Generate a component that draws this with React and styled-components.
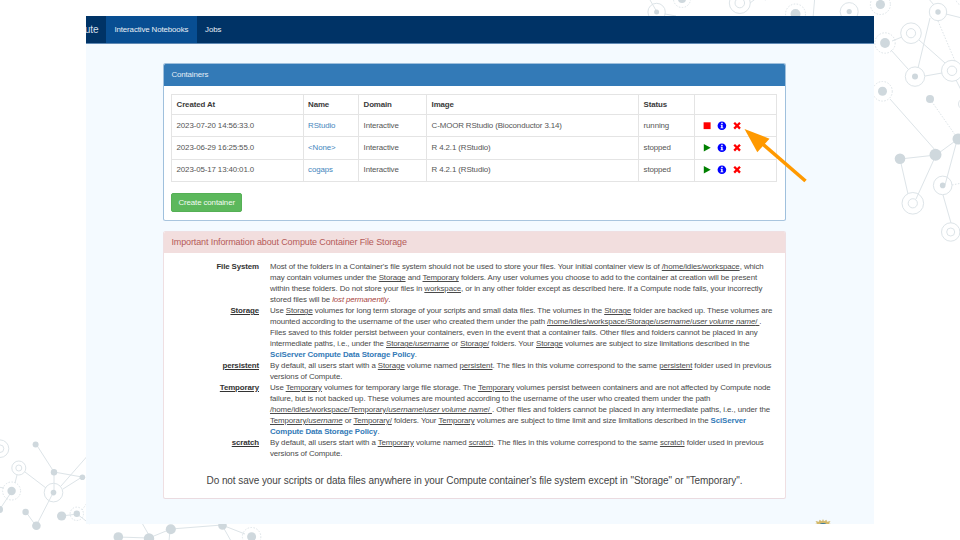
import React from 'react';
import styled, { createGlobalStyle, css } from 'styled-components';

const GlobalStyle = createGlobalStyle`
  *, *::before, *::after { box-sizing: border-box; }
  body { margin: 0; background: #fff; overflow: hidden; }
`;

const Slide = styled.div`
  position: relative;
  width: 960px;
  height: 540px;
  padding: 16px 86px;
  overflow: hidden;
  font-family: 'Liberation Sans', Arial, sans-serif;
  font-size: 7.9px;
  letter-spacing: -0.115px;
  line-height: 10.97px;
  color: #4a4a4a;
`;

const Backdrop = styled.svg`
  position: absolute;
  inset: 0;
`;

const Pointer = styled.svg`
  position: absolute;
  left: 740px;
  top: 124px;
`;

const Screen = styled.main`
  position: relative;
  width: 788px;
  height: 508px;
  background: #f4faff;
  overflow: hidden;
`;

const NavBar = styled.nav`
  display: flex;
  height: 27.5px;
  background: #003366;
  border-bottom: 1px solid #5f89b4;
  color: #e8eef5;
`;

const Brand = styled.div`
  display: flex;
  align-items: center;
  width: 20px;
  padding-top: 3px;
  font-size: 10.1px;
  text-indent: -1.2px;
  color: #d5dfe9;
`;

const NavItem = styled.a`
  display: flex;
  align-items: center;
  padding: 2px 8.4px 0;
  background: ${(p) => (p.$active ? '#084e92' : 'transparent')};
`;

const Content = styled.div`
  display: flex;
  flex-direction: column;
  gap: 10.5px;
  width: 623px;
  margin: 19.5px 0 0 77px;
`;

const Panel = styled.section`
  height: ${(p) => p.$height}px;
  border: 1px solid ${(p) => (p.$danger ? '#efdfe2' : '#9fc0dd')};
  border-bottom-color: ${(p) => (p.$danger ? '#eadbe0' : '#a9c5de')};
  border-radius: 2.5px;
  background: #fff;
  overflow: hidden;
`;

const PanelHeading = styled.header`
  display: flex;
  align-items: center;
  height: 22px;
  padding-left: 7.4px;
  ${(p) =>
    p.$danger
      ? css`
          height: 21px;
          background: #f2dede;
          color: #b55a58;
          font-size: 9px;
        `
      : css`
          background: #337ab7;
          color: #e3edf6;
        `}
`;

const Table = styled.div`
  width: 606px;
  margin: 8px 0 0 7.2px;
  border: 1px solid #e4e4e4;
  border-width: 1px 0 0 1px;
`;

const Row = styled.div`
  display: grid;
  grid-template-columns: 131.5px 55.5px 68px 212px 56px 82px;
  height: ${(p) => (p.$head ? 20 : 22.4)}px;
  font-weight: ${(p) => (p.$head ? 'bold' : 'normal')};
  color: ${(p) => (p.$head ? '#3a3a3a' : '#555')};
`;

const Cell = styled.div`
  display: flex;
  align-items: center;
  padding: 1px 0 0 4.4px;
  border: 1px solid #e4e4e4;
  border-width: 0 1px 1px 0;
  white-space: nowrap;
`;

const NameLink = styled.a`
  color: #4586bd;
`;

const Actions = styled(Cell)`
  padding: 0 0 0 7.2px;
  gap: 4.6px;
`;

const Icon = styled.svg`
  width: 10px;
  height: 10px;
`;

const CreateButton = styled.button`
  display: block;
  width: 71px;
  height: 19px;
  margin: 11px 0 0 7.2px;
  padding: 1px 0 0;
  border: 1px solid #55b055;
  border-radius: 2px;
  background: #5cb85c;
  color: #f2faf2;
  font: inherit;
  letter-spacing: inherit;
`;

const Definitions = styled.dl`
  margin: 9.2px 0 0;
`;

const Definition = styled.div`
  display: grid;
  grid-template-columns: 95px 1fr;
  column-gap: 11px;
`;

const Term = styled.dt`
  font-weight: bold;
  text-align: right;
  color: #333;
  text-decoration: ${(p) => (p.$underlined ? 'underline' : 'none')};
`;

const Detail = styled.dd`
  margin: 0;
`;

const Line = styled.div`
  width: ${(p) => p.$width}px;
  height: 10.97px;
  text-align-last: justify;
  white-space: nowrap;
`;

const Danger = styled.em`
  color: #a94442;
`;

const Policy = styled.a`
  font-weight: bold;
  color: #337ab7;
`;

const Warning = styled.p`
  width: 536px;
  margin: 15px 0 0 42.5px;
  font-size: 10px;
  letter-spacing: -0.07px;
  line-height: 12px;
  text-align-last: justify;
  white-space: nowrap;
  color: #444;
`;

const Crest = styled.svg`
  position: absolute;
  left: 727px;
  top: 502.5px;
`;

const StopIcon = () => (
  <Icon viewBox="0 0 10 10"><rect x="1.6" y="1.3" width="7" height="6.8" fill="#f00" /></Icon>
);
const PlayIcon = () => (
  <Icon viewBox="0 0 10 10"><path d="M1.8 1 8.7 4.8 1.8 8.6Z" fill="#008000" /></Icon>
);
const InfoIcon = () => (
  <Icon viewBox="0 0 10 10">
    <circle cx="4.9" cy="4.7" r="4.3" fill="#00f" />
    <path d="M4.2 1.7h1.5v1.2H4.2zM3.6 3.7h2v2.8h.7v.8H3.5v-.8h.7v-2h-.6z" fill="#fff" />
  </Icon>
);
const RemoveIcon = () => (
  <Icon viewBox="0 0 10 10"><path d="M2.2 1.8 8 7.6M8 1.8 2.2 7.6" stroke="#f00" strokeWidth="2.3" /></Icon>
);

const containers = [
  { created: '2023-07-20 14:56:33.0', name: 'RStudio', image: 'C-MOOR RStudio (Bioconductor 3.14)', status: 'running' },
  { created: '2023-06-29 16:25:55.0', name: '<None>', image: 'R 4.2.1 (RStudio)', status: 'stopped' },
  { created: '2023-05-17 13:40:01.0', name: 'cogaps', image: 'R 4.2.1 (RStudio)', status: 'stopped' },
];

const links = [
  [650, 0, 657, 12], [665, 14, 676, 16], [750, 3, 758, -3], [815, -5, 813, 18], [766, 0, 738, -8],
  [892, 41, 902, 37], [891, 50, 908, 69], [918, 68, 930, 18], [919, 40, 945, 63], [925, 76, 942, 73],
  [928, -2, 934, 5], [946, 14, 962, 18], [956, 80, 962, 92],
  [890, 99, 936, 151], [900, 159, 936, 155], [936, 155, 958, 139], [900, 159, 908, 194],
  [936, 155, 916, 199], [956, 144, 945, 185], [943, 195, 951, 223],
  [36, 444, 54, 472], [54, 472, 82, 477], [54, 472, 54, 493], [82, 477, 63, 489], [61, 486, 90, 453],
  [25, 472, 46, 488], [17, 475, 15, 483], [53, 493, 36, 526], [36, 526, 26, 512], [12, 491, 0, 509],
  [-2, 487, 4, 488], [62, 516, 77, 514], [77, 514, 90, 524], [118, 537, 149, 538], [149, 538, 171, 529],
  [171, 529, 222, 525], [222, 525, 245, 534], [142, 523, 150, 537], [222, 525, 231, 541], [170, 530, 169, 541],
];
const dashedLinks = [[938, 21, 955, 61], [930, 99, 958, 139], [952, 185, 962, 183], [82, 510, 90, 499]];
const dots = [
  [656.6, 12, 2.5], [682, -1, 4], [795.5, 14, 5], [849.2, 11.6, 2.6], [880.4, 4.5, 4.6], [885, 43, 4.9], [938, 12, 2.7],
  [915, 76.6, 3], [882.5, 91.3, 4.5], [930, 99, 4], [900, 158.8, 5.3], [935.5, 154.7, 6], [958, 139, 5.5],
  [942.7, 185.4, 2.8], [35.6, 444.4, 3], [54, 472.3, 3.2], [82.4, 477.3, 2.8], [53.5, 492.6, 2.8], [11.6, 491, 4.2],
  [-.5, 509.5, 3.5], [25.6, 512, 3.2], [36.4, 525.8, 4.3], [61.6, 516, 4.6], [76.8, 513.8, 3.2],
  [118.3, 537, 4.8], [149, 538.5, 5.2], [170.8, 529.2, 5], [222.5, 525.4, 4.3], [251.6, 536.7, 4.5],
];
const rings = [
  [656.6, 12, 8.7], [739.8, 3, 10.5], [739.8, 3, 4.8], [849.2, 11.6, 9], [938, 12, 8.7], [911, 33.2, 10.3],
  [911, 33.2, 4.6], [915, 76.6, 9.7], [952, 70.8, 10.5], [952, 70.8, 4.7], [964, 104, 5.5], [942.7, 185.4, 9.3],
  [912.8, 203.3, 10.8], [912.8, 203.3, 4.6], [950.7, 232, 9.2], [950.7, 232, 4], [0, 448.7, 8.8], [0, 448.7, 3.8],
  [18.8, 468, 7], [18.8, 468, 3], [53.5, 492.6, 9.3],
];
const dashedRings = [
  [682, -1, 8.5], [795.5, 14, 10], [880.4, 4.5, 10], [885, 43, 10.2], [882.5, 91.3, 9.8], [962, -1, 6],
  [11.6, 491, 9], [76.8, 513.8, 6.7], [251.6, 536.7, 9.2],
];

const Network = () => (
  <Backdrop width="960" height="540" fill="none" stroke="#dde4e8">
    {links.map(([a, b, c, d], i) => <line key={i} x1={a} y1={b} x2={c} y2={d} />)}
    {dashedLinks.map(([a, b, c, d], i) => <line key={i} x1={a} y1={b} x2={c} y2={d} strokeDasharray="1.5 1.5" />)}
    {rings.map(([x, y, r], i) => <circle key={i} cx={x} cy={y} r={r} />)}
    {dashedRings.map(([x, y, r], i) => <circle key={i} cx={x} cy={y} r={r} strokeDasharray="1.5 1.5" />)}
    {dots.map(([x, y, r], i) => <circle key={i} cx={x} cy={y} r={r} fill="#cfd8dd" stroke="none" />)}
  </Backdrop>
);

export default function App() {
  return (
    <Slide>
      <GlobalStyle />
      <Network />
      <Screen>
        <NavBar>
          <Brand>ute</Brand>
          <NavItem $active>Interactive Notebooks</NavItem>
          <NavItem>Jobs</NavItem>
        </NavBar>
        <Content>
          <Panel $height={157.5}>
            <PanelHeading>Containers</PanelHeading>
            <Table>
              <Row $head>
                <Cell>Created At</Cell><Cell>Name</Cell><Cell>Domain</Cell>
                <Cell>Image</Cell><Cell>Status</Cell><Cell />
              </Row>
              {containers.map((c) => (
                <Row key={c.created}>
                  <Cell>{c.created}</Cell>
                  <Cell><NameLink>{c.name}</NameLink></Cell>
                  <Cell>Interactive</Cell>
                  <Cell>{c.image}</Cell>
                  <Cell>{c.status}</Cell>
                  <Actions>
                    {c.status === 'running' ? <StopIcon /> : <PlayIcon />}
                    <InfoIcon />
                    <RemoveIcon />
                  </Actions>
                </Row>
              ))}
            </Table>
            <CreateButton>Create container</CreateButton>
          </Panel>
          <Panel $danger $height={268}>
            <PanelHeading $danger>Important Information about Compute Container File Storage</PanelHeading>
            <Definitions>
              <Definition>
                <Term>File System</Term>
                <Detail>
                  <Line $width={493.5}>Most of the folders in a Container's file system should not be used to store your files. Your initial container view is of <u>/home/idies/workspace</u>, which</Line>
                  <Line $width={487}>may contain volumes under the <u>Storage</u> and <u>Temporary</u> folders. Any user volumes you choose to add to the container at creation will be present</Line>
                  <Line $width={492.3}>within these folders. Do not store your files in <u>workspace</u>, or in any other folder except as described here. If a Compute node fails, your incorrectly</Line>
                  <Line $width={120.3}>stored files will be <Danger>lost permanently</Danger>.</Line>
                </Detail>
              </Definition>
              <Definition>
                <Term $underlined>Storage</Term>
                <Detail>
                  <Line $width={502.3}>Use <u>Storage</u> volumes for long term storage of your scripts and small data files. The volumes in the <u>Storage</u> folder are backed up. These volumes are</Line>
                  <Line $width={491.2}>mounted according to the username of the user who created them under the path <u>/home/idies/workspace/Storage/<i>username</i>/<i>user volume name</i>/ </u>.</Line>
                  <Line $width={487.6}>Files saved to this folder persist between your containers, even in the event that a container fails. Other files and folders cannot be placed in any</Line>
                  <Line $width={479.6}>intermediate paths, i.e., under the <u>Storage/<i>username</i></u> or <u>Storage/</u> folders. Your <u>Storage</u> volumes are subject to size limitations described in the</Line>
                  <Line $width={145.8}><Policy>SciServer Compute Data Storage Policy</Policy>.</Line>
                </Detail>
              </Definition>
              <Definition>
                <Term $underlined>persistent</Term>
                <Detail>
                  <Line $width={501.3}>By default, all users start with a <u>Storage</u> volume named <u>persistent</u>. The files in this volume correspond to the same <u>persistent</u> folder used in previous</Line>
                  <Line $width={72}>versions of Compute.</Line>
                </Detail>
              </Definition>
              <Definition>
                <Term $underlined>Temporary</Term>
                <Detail>
                  <Line $width={500.6}>Use <u>Temporary</u> volumes for temporary large file storage. The <u>Temporary</u> volumes persist between containers and are not affected by Compute node</Line>
                  <Line $width={440.3}>failure, but is not backed up. These volumes are mounted according to the username of the user who created them under the path</Line>
                  <Line $width={500}><u>/home/idies/workspace/Temporary/<i>username</i>/<i>user volume name</i>/ </u>. Other files and folders cannot be placed in any intermediate paths, i.e., under the</Line>
                  <Line $width={476}><u>Temporary/<i>username</i></u> or <u>Temporary/</u> folders. Your <u>Temporary</u> volumes are subject to time limit and size limitations described in the <Policy>SciServer</Policy></Line>
                  <Line $width={108.5}><Policy>Compute Data Storage Policy</Policy>.</Line>
                </Detail>
              </Definition>
              <Definition>
                <Term $underlined>scratch</Term>
                <Detail>
                  <Line $width={493.6}>By default, all users start with a <u>Temporary</u> volume named <u>scratch</u>. The files in this volume correspond to the same <u>scratch</u> folder used in previous</Line>
                  <Line $width={72}>versions of Compute.</Line>
                </Detail>
              </Definition>
            </Definitions>
            <Warning>Do not save your scripts or data files anywhere in your Compute container's file system except in "Storage" or "Temporary".</Warning>
          </Panel>
        </Content>
        <Crest width="20" height="6" viewBox="0 0 20 6">
          <path d="M0 5.5 4 4.5 2.5 2l3.5.8L6.500 .8l2.500 1.500L10 0l1 2.300L13.500 .8l.5 2L17.500 2 16 4.500l4 1z" fill="#d3b96c" />
          <path d="M6.5 6a3.5 2 0 0 1 7 0z" fill="#397b9d" />
        </Crest>
      </Screen>
      <Pointer width="70" height="62" viewBox="0 0 70 62">
        <path d="M21 18.5 65.5 57" stroke="#ff9900" strokeWidth="3.6" />
        <path d="M4.5 5 29.5 14.7 17.3 28.3Z" fill="#ff9900" />
      </Pointer>
    </Slide>
  );
}
